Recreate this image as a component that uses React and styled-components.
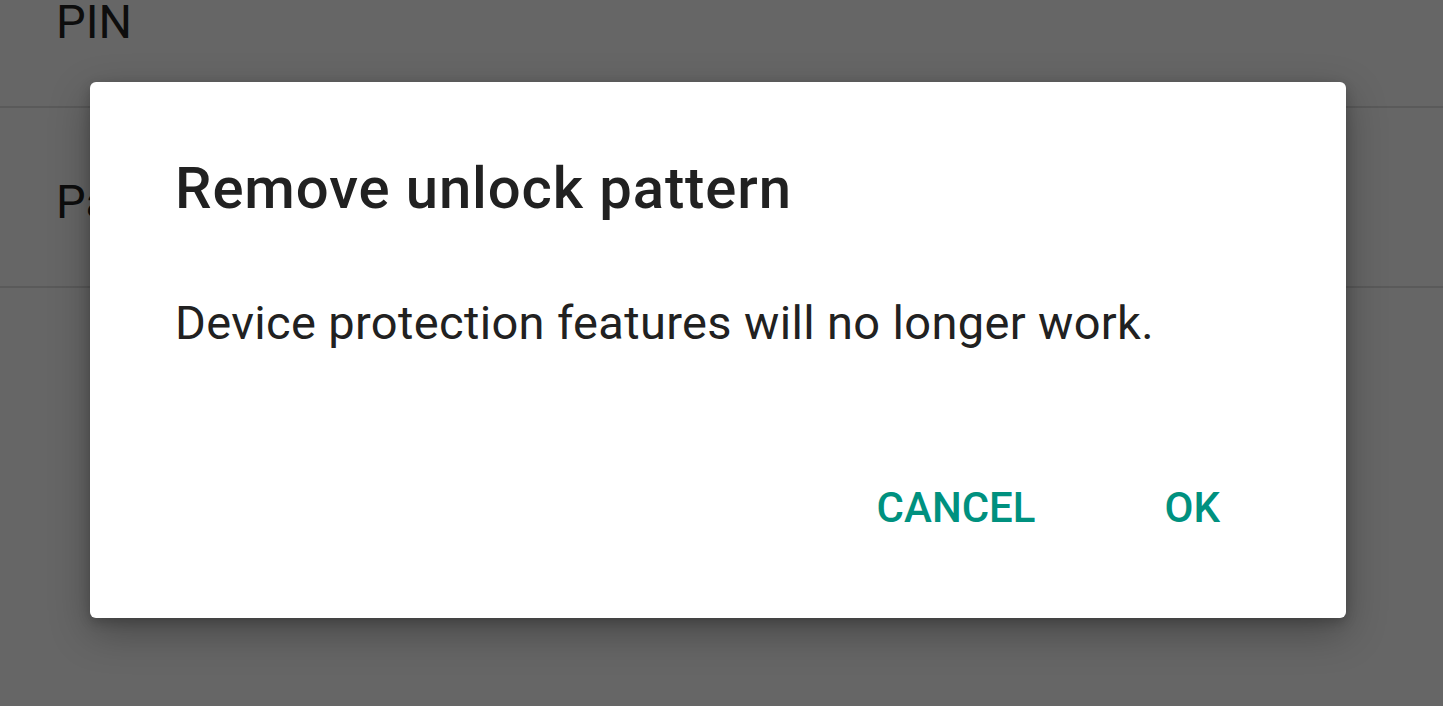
import React from "react";
import styled, { createGlobalStyle } from "styled-components";

const Global = createGlobalStyle`
  html, body { margin: 0; padding: 0; background: #ffffff; }
  body { font-family: Roboto, "Noto Sans", sans-serif; overflow: hidden; }
  #root { width: 1443px; height: 706px; position: relative; overflow: hidden; }
`;

const Screen = styled.div`
  position: relative;
  width: 1443px;
  height: 706px;
  background: #ffffff;
  overflow: hidden;
`;

const List = styled.div`
  display: flex;
  flex-direction: column;
  margin-top: -72px;
`;

const Row = styled.div`
  height: 180px;
  box-sizing: border-box;
  display: flex;
  align-items: center;
  padding: 8px 0 0 56px;
  border-bottom: 2px solid #e2e2e2;
  font-size: 47px;
  color: #222222;
`;

const Scrim = styled.div`
  position: absolute;
  inset: 0;
  background: rgba(0, 0, 0, 0.6);
`;

const Dialog = styled.div`
  position: absolute;
  left: 90px;
  top: 82px;
  width: 1256px;
  height: 536px;
  box-sizing: border-box;
  background: #ffffff;
  border-radius: 6px;
  box-shadow: 0 14px 40px rgba(0, 0, 0, 0.3), 0 4px 12px rgba(0, 0, 0, 0.2);
  padding: 72px 0 0 85px;
  display: flex;
  flex-direction: column;
`;

const Title = styled.h2`
  margin: 0;
  font-size: 58px;
  line-height: 68px;
  font-weight: 500;
  letter-spacing: 0.9px;
  color: #212121;
`;

const Message = styled.p`
  margin: 73px 0 0;
  font-size: 47px;
  line-height: 56px;
  font-weight: 400;
  letter-spacing: 0.35px;
  color: #212121;
`;

const Actions = styled.div`
  margin-top: 132px;
  display: flex;
  justify-content: flex-end;
  gap: 129px;
  padding-right: 126px;
`;

const ActionButton = styled.button`
  border: none;
  background: none;
  padding: 0;
  font-family: Roboto, "Noto Sans", sans-serif;
  font-size: 42px;
  line-height: 50px;
  font-weight: 500;
  color: #00917f;
  text-transform: uppercase;
  cursor: pointer;
`;

export default function App() {
  return (
    <>
      <Global />
      <Screen>
        <List>
          <Row>PIN</Row>
          <Row>Password</Row>
        </List>
        <Scrim />
        <Dialog>
          <Title>Remove unlock pattern</Title>
          <Message>Device protection features will no longer work.</Message>
          <Actions>
            <ActionButton>Cancel</ActionButton>
            <ActionButton>OK</ActionButton>
          </Actions>
        </Dialog>
      </Screen>
    </>
  );
}
